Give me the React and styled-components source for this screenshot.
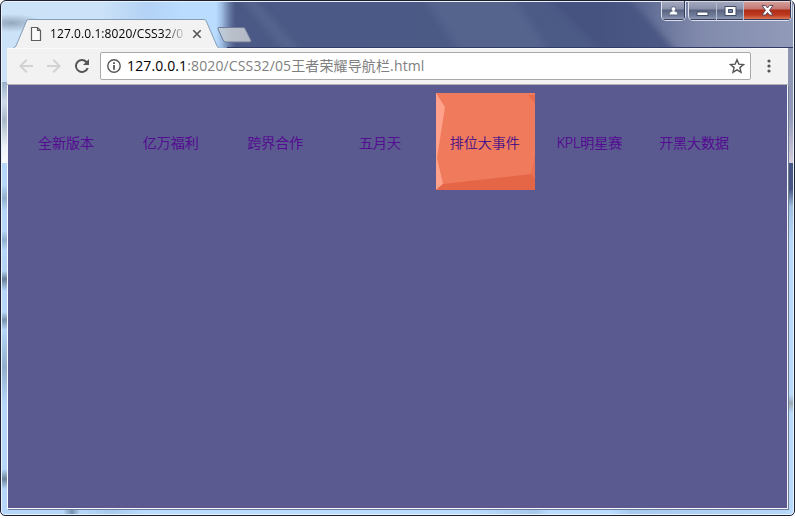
import React from "react";
import styled, { createGlobalStyle } from "styled-components";

const GlobalStyle = createGlobalStyle`
  * { box-sizing: border-box; }
  body { margin: 0; background: #fff; overflow: hidden; }
`;

const Desktop = styled.div`
  width: 795px;
  height: 519px;
  background: #fff;
`;

const WindowFrame = styled.div`
  width: 795px;
  height: 516px;
  padding: 0 6px 6px;
  display: flex;
  flex-direction: column;
  border: 1px solid #1c2030;
  border-radius: 6px 6px 5px 5px;
  box-shadow: inset 0 0 0 1px #e9f3ff;
  background:
    radial-gradient(ellipse 34px 9px at 10px 22px, #788ba0aa, transparent) no-repeat,
    linear-gradient(#9ab0c8, #d0dcea 20px, #a9b8c8 38px, #edf3f8 65px, #fafafa 81px) 0 81px / 8px 81px no-repeat,
    linear-gradient(#b6d7f9 0, #b6d7f9 22px, #91afcd 35px, #b6d7f9 48px, #b6d7f9 68px, #91afcd 77px, #b6d7f9 87px, #b3d3f4 108px, #698099 116px, #b6d7f9 128px, #b6d7f9 149px, #7894b0 157px, #b6d7f9 167px, #91afcd 204px, #b6d7f9 240px, #b6d7f9 306px, #6d849d 316px, #b6d7f9 326px) 0 162px / 8px 354px no-repeat,
    linear-gradient(#8e96b4, #9299b8 35px, #d5cdd9 81px) 100% 81px / 8px 81px no-repeat,
    linear-gradient(#485683 0, #485683 26px, #a0c0df 44px, #b7dafd 80px, #b7dafd 232px, #9da8b1 240px, #b7dafd 250px) 100% 162px / 8px 354px no-repeat,
    linear-gradient(#8e96b4, #8e96b4) 100% 0 / 8px 81px no-repeat,
    linear-gradient(90deg, #b6d7f9 62px, #7590ad 71px, #b6d7f9 79px, #a8cbed 110px, #b9dcff 145px, #b9dcff 470px, #a5c8eb 535px, #b9dcff 548px, #b9dcff 610px, #a6caee 630px, #b6d7f9) 0 100% / 100% 8px no-repeat,
    linear-gradient(90deg, #cce2f7 0, #cbe2f8 100px, #b3d2f5 145px, #b9dcff 180px, #b9dcff 215px, #859fc7 226px, #4a5987 235px);
`;

const TitleBar = styled.header`
  height: 47px;
  flex: none;
  display: flex;
  align-items: flex-end;
  position: relative;
`;

const Reflection = styled.svg`
  position: absolute;
  left: 215px;
  top: 1px;
  width: 571px;
  height: 46px;
`;

const Tab = styled.div`
  position: relative;
  width: 207px;
  height: 30px;
  margin: 0 0 -1px 6px;
  padding: 0 14px 0 17px;
  display: flex;
  align-items: center;
`;

const TabShape = styled.svg`
  position: absolute;
  inset: 0;
  overflow: visible;
`;

const TabIcon = styled.svg`
  position: relative;
  flex: none;
  width: 12px;
  height: 16px;
`;

const TabTitle = styled.span`
  position: relative;
  width: 137px;
  margin-left: 8px;
  white-space: nowrap;
  font: 12px/18px "Open Sans", "Noto Sans", sans-serif;
  letter-spacing: 0.08px;
  color: #000;
  mask-image: linear-gradient(90deg, #000 114px, transparent 137px);
`;

const CloseIcon = styled.svg`
  position: relative;
  flex: none;
  margin-left: 5px;
`;

const NewTab = styled.svg`
  position: relative;
  margin: 0 0 4px -4px;
`;

const Controls = styled.div`
  position: relative;
  align-self: flex-start;
  display: flex;
  gap: 2px;
  margin-left: auto;
  margin-right: -4px;
`;

const ControlGroup = styled.div`
  display: flex;
  height: 20px;
  border: 1px solid #dce0ec;
  border-top: 0;
  border-radius: 0 0 5px 5px;
  overflow: hidden;
`;

const ControlButton = styled.div`
  width: ${(p) => p.$width}px;
  display: flex;
  align-items: center;
  justify-content: center;
  border-right: 1px solid #b6bdd1;
  background: ${(p) =>
    p.$danger
      ? "linear-gradient(#d5a39f, #c47670 8px, #ad2c17 9px, #bf3b1f 14px, #df8569)"
      : "linear-gradient(#a5abc0, #8990aa 8px, #59637f 9px, #737e9c 15px, #9ba4bc)"};
  box-shadow: inset 0 1px #ffffff88, inset 0 -1px #343d5b;

  &:last-child {
    border-right-color: #343d5b;
  }
`;

const Toolbar = styled.div`
  position: relative;
  width: 781px;
  height: 37px;
  flex: none;
  display: flex;
  align-items: center;
  padding: 0 0 1px 9px;
  background: #f2f2f2;
  border-top: 1px solid #f9f9f9;
  border-bottom: 1px solid #b4b2b0;
`;

const NavIcon = styled.svg`
  flex: none;
  margin-right: 8px;
  fill: ${(p) => (p.$disabled ? "#d2d2d2" : "#555")};
`;

const AddressBar = styled.div`
  width: 651px;
  height: 28px;
  display: flex;
  align-items: center;
  border: 1px solid #a9a9a9;
  border-radius: 2px;
  background: #fff;
  padding: 0 5px;
`;

const Url = styled.div`
  flex: 1;
  margin-left: 5px;
  white-space: nowrap;
  font: 14px/22px "Open Sans", "Noto Sans CJK SC", sans-serif;
  letter-spacing: 0.13px;
  color: #808080;
`;

const Host = styled.span`
  color: #000;
`;

const MenuIcon = styled.svg`
  margin-left: 10px;
  fill: #555;
`;

const Page = styled.main`
  width: 781px;
  flex: 1;
  padding: 8px;
  background: #5a5990;
  border: solid #f7f9ff;
  border-width: 0 1px 1px;
  box-shadow: 1px 1px #6d7c98;
`;

const NavList = styled.nav`
  display: flex;
  gap: 4.7px;
`;

const NavLink = styled.a`
  position: relative;
  width: 100px;
  height: 97px;
  display: flex;
  align-items: center;
  justify-content: center;
  padding-top: 3px;
  flex: none;
  font: 300 14px/20px "Open Sans", "Noto Sans CJK SC", sans-serif;
  color: ${(p) => (p.$active ? "#3b0a8c" : "#540092")};
  -webkit-text-stroke: 0.2px currentColor;
`;

const Tile = styled.svg`
  position: absolute;
  left: 1.2px;
  top: 0;
`;

const Label = styled.span`
  position: relative;
`;

const items = ["全新版本", "亿万福利", "跨界合作", "五月天", "排位大事件", "KPL明星赛", "开黑大数据"];

function ActiveTile() {
  return (
    <Tile width="99" height="97">
      <path fill="#ef7b5c" d="M0 0h99v97H0z" />
      <path fill="#ffa18b" d="M0 0l9 14L1 65 7 91l-7 6z" />
      <path fill="#e46646" d="M7 91l89-10 3 5v11H0z" />
      <path fill="#e86d4e" d="M92 2h7v9z" />
      <path fill="#e97051" d="M99 62v24l-4-5z" />
    </Tile>
  );
}

export default function App() {
  return (
    <Desktop>
      <GlobalStyle />
      <WindowFrame>
        <TitleBar>
          <Reflection viewBox="0 0 571 46">
            <defs>
              <linearGradient id="glass">
                <stop offset="0" stopColor="#48567f" stopOpacity="0" />
                <stop offset=".04" stopColor="#4a5985" />
                <stop offset=".65" stopColor="#4c5a86" />
                <stop offset="1" stopColor="#8790b0" />
              </linearGradient>
              <linearGradient id="sheen">
                <stop offset="0" stopColor="#5f6b95" />
                <stop offset=".35" stopColor="#8790b0" />
                <stop offset="1" stopColor="#979fbd" />
              </linearGradient>
              <filter id="soften" x="-10%" width="120%">
                <feGaussianBlur stdDeviation="4 0" />
              </filter>
            </defs>
            <path fill="url(#glass)" d="M0 0h571v46H0z" />
            <g filter="url(#soften)">
              <path fill="#5c6993" opacity=".6" d="M22 0h14l40 46H59zM205 0h90l30 46h-90z" />
              <path fill="#414f7d" opacity=".7" d="M330 0h80l42 46h-75z" />
              <path fill="url(#sheen)" opacity=".75" d="M420 0h161v46H452z" />
            </g>
            <path fill="#303c65" d="M5 45h566v1H5z" />
          </Reflection>
          <Tab>
            <TabShape width="207" height="30">
              <path d="M0 29.500L3 27 13.500 2Q14.200.5 16 .5h175q1.500 0 2.200 1.500L204 27q1 2.500 4 2.500" fill="#f2f2f2" stroke="#869db7" />
            </TabShape>
            <TabIcon viewBox="0 0 12 16">
              <path d="M1.500 1.500h6l3 3v10h-9zM7.500 1.500v3h3" fill="#fbfbfb" stroke="#5e5e5e" strokeWidth="1.200" />
            </TabIcon>
            <TabTitle>127.0.0.1:8020/CSS32/0</TabTitle>
            <CloseIcon width="10" height="10">
              <path d="M1.300 1.300l7.400 7.400M8.700 1.300L1.300 8.700" stroke="#555" strokeWidth="1.600" />
            </CloseIcon>
          </Tab>
          <NewTab width="38" height="18">
            <defs>
              <linearGradient id="newtab">
                <stop offset="0" stopColor="#bfd0df" />
                <stop offset=".4" stopColor="#bac0c9" />
                <stop offset="1" stopColor="#b2b7c5" />
              </linearGradient>
            </defs>
            <path d="M3 1.500h24q1.500 0 2 1l6 12q.5 1.500-1 1.500H10q-2 0-3-2L2 3q-.5-1.500 1-1.500z" fill="url(#newtab)" stroke="#6c7b98" />
          </NewTab>
          <Controls>
            <ControlGroup>
              <ControlButton $width={23}>
                <svg width="11" height="10">
                  <path d="M5.500.7a2.200 2.200 0 0 1 1 4.200q3.500.5 3.500 4H1q0-3.500 3.500-4A2.200 2.200 0 0 1 5.500.7z" fill="#fff" stroke="#535e7b" strokeWidth=".8" />
                </svg>
              </ControlButton>
            </ControlGroup>
            <ControlGroup>
              <ControlButton $width={28}>
                <svg width="13" height="10"><path d="M1 6h11v3.500H1z" fill="#fff" stroke="#414b67" /></svg>
              </ControlButton>
              <ControlButton $width={27}>
                <svg width="13" height="10">
                  <path d="M1 .5h11v9H1z" fill="#fff" stroke="#414b67" />
                  <path d="M4.500 3.500h4v3h-4z" fill="#7680a0" stroke="#414b67" />
                </svg>
              </ControlButton>
              <ControlButton $width={47} $danger>
                <svg width="13" height="11">
                  <path d="M1 .5h3.500l2 2.500 2-2.500H12L8.500 5.300l3.500 4.700H8.500l-2-2.500-2 2.500H1l3.500-4.700z" fill="#fff" stroke="#5b4c60" />
                </svg>
              </ControlButton>
            </ControlGroup>
          </Controls>
        </TitleBar>
        <Toolbar>
          <NavIcon $disabled width="20" height="20" viewBox="0 0 20 20">
            <path d="M17 9v2H6.800l4.700 4.600-1.400 1.400L3 10l7.100-7 1.400 1.400L6.800 9z" />
          </NavIcon>
          <NavIcon $disabled width="20" height="20" viewBox="0 0 20 20">
            <path d="M3 9v2h10.200l-4.700 4.600L9.900 17l7.100-7-7.100-7-1.400 1.400L13.200 9z" />
          </NavIcon>
          <NavIcon width="20" height="20" viewBox="0 0 20 20">
            <path d="M15 5A7 7 0 1 0 16.700 12h-2.200A5 5 0 1 1 13.500 6.500L11 9h6V3z" />
          </NavIcon>
          <AddressBar>
            <svg width="16" height="16">
              <circle cx="8" cy="8" r="6.200" fill="none" stroke="#555" strokeWidth="1.400" />
              <path d="M7.100 7h1.800v4.700H7.100zM7.100 4.200h1.800V6H7.100z" fill="#555" />
            </svg>
            <Url><Host>127.0.0.1</Host>:8020/CSS32/05王者荣耀导航栏.html</Url>
            <svg width="16" height="16">
              <path d="M8 1.700l1.800 4.400 4.700.4-3.600 3.100 1.100 4.700L8 11.800l-4 2.500 1.100-4.700-3.600-3.100 4.700-.4z" fill="none" stroke="#555" strokeWidth="1.400" />
            </svg>
          </AddressBar>
          <MenuIcon width="16" height="16">
            <circle cx="8" cy="3" r="1.600" /><circle cx="8" cy="8" r="1.600" /><circle cx="8" cy="13" r="1.600" />
          </MenuIcon>
        </Toolbar>
        <Page>
          <NavList>
            {items.map((label, i) => (
              <NavLink key={label} $active={i === 4}>
                {i === 4 && <ActiveTile />}
                <Label>{label}</Label>
              </NavLink>
            ))}
          </NavList>
        </Page>
      </WindowFrame>
    </Desktop>
  );
}
